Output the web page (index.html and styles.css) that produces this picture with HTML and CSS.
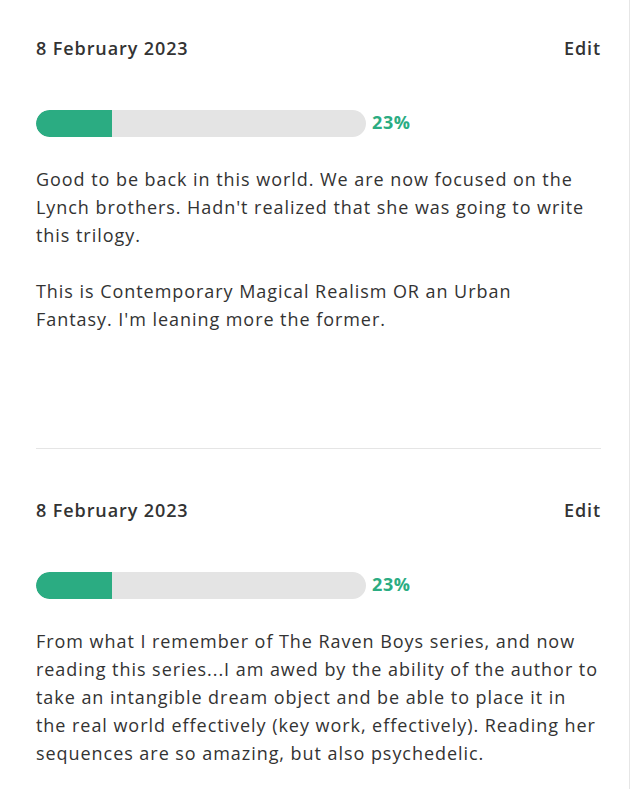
FILE: index.html
```html
<!DOCTYPE html>
<html lang="en">
<head>
<meta charset="utf-8">
<title>Reading updates</title>
<link rel="stylesheet" href="styles.css">
</head>
<body>
<main class="feed">
  <article class="entry">
    <header class="entry-head">
      <span class="entry-date">8 February 2023</span>
      <a class="entry-edit" href="#">Edit</a>
    </header>
    <div class="progress">
      <div class="progress-track"><div class="progress-fill" style="width:23%"></div></div>
      <span class="progress-value">23%</span>
    </div>
    <div class="entry-body">
      <p>Good to be back in this world. We are now focused on the Lynch brothers. Hadn't realized that she was going to write this trilogy.</p>
      <p>This is Contemporary Magical Realism OR an Urban<br>Fantasy. I'm leaning more the former.</p>
    </div>
  </article>
  <article class="entry">
    <header class="entry-head">
      <span class="entry-date">8 February 2023</span>
      <a class="entry-edit" href="#">Edit</a>
    </header>
    <div class="progress">
      <div class="progress-track"><div class="progress-fill" style="width:23%"></div></div>
      <span class="progress-value">23%</span>
    </div>
    <div class="entry-body">
      <p>From what I remember of The Raven Boys series, and now reading this series...I am awed by the ability of the author to take an intangible dream object and be able to place it in the real world effectively (key work, effectively). Reading her sequences are so amazing, but also psychedelic.</p>
    </div>
  </article>
</main>
</body>
</html>
```
FILE: styles.css
```css
html, body {
  margin: 0;
  padding: 0;
  background: #ffffff;
}
body {
  font-family: "Open Sans", "Liberation Sans", sans-serif;
  color: #333333;
}
.feed {
  width: 630px;
  min-height: 789px;
  box-sizing: border-box;
  border-right: 1px solid #e6e6e6;
  padding: 0 28px 0 36px;
}
.entry {
  padding: 36px 0 115px;
  border-bottom: 1px solid #e5e5e5;
}
.entry + .entry {
  padding-top: 49px;
  padding-bottom: 0;
  border-bottom: none;
}
.entry-head {
  display: flex;
  justify-content: space-between;
  align-items: center;
  height: 24px;
  font-size: 18px;
  font-weight: 600;
  line-height: 24px;
  letter-spacing: 0.9px;
}
.entry-date {
  color: #333333;
}
.entry-edit {
  color: #333333;
  text-decoration: none;
}
.progress {
  display: flex;
  align-items: center;
  gap: 6px;
  margin-top: 50px;
}
.progress-track {
  width: 330px;
  height: 27px;
  border-radius: 14px;
  background: #e4e4e4;
  overflow: hidden;
}
.progress-fill {
  height: 100%;
  background: #2bac82;
  border-radius: 14px 0 0 14px;
}
.progress-value {
  color: #2bac82;
  font-size: 18px;
  font-weight: 700;
  line-height: 20px;
  letter-spacing: 0.6px;
  padding-bottom: 4px;
}
.entry-body {
  margin-top: 28px;
  font-size: 18px;
  line-height: 28px;
  letter-spacing: 0.95px;
  color: #333333;
}
.entry-body p {
  margin: 0;
}
.entry-body p + p {
  margin-top: 28px;
}
```
